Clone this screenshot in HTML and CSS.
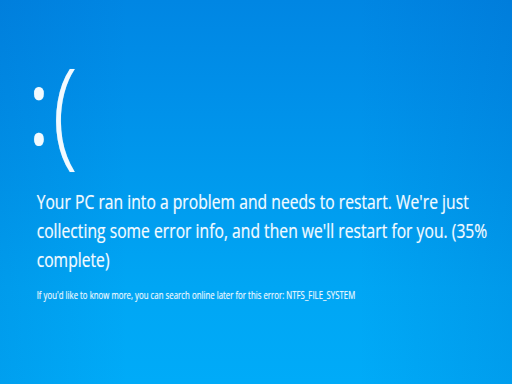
FILE: index.html
```html
<!DOCTYPE html>
<html lang="en">
<head>
<meta charset="utf-8">
<title>Your PC ran into a problem</title>
<link rel="stylesheet" href="styles.css">
</head>
<body>
<main class="screen">
  <div class="face"><span class="eyes">:</span><span class="mouth">(</span></div>
  <div class="message">
    <p class="lead">Your PC ran into a problem and needs to restart. We're just collecting some error info, and then we'll restart for you. (35% complete)</p>
    <p class="detail">If you'd like to know more, you can search online later for this error: NTFS_FILE_SYSTEM</p>
  </div>
</main>
</body>
</html>
```

FILE: styles.css
```css
html, body {
  margin: 0;
  height: 100%;
}

body {
  width: 512px;
  height: 384px;
  overflow: hidden;
  background:
    linear-gradient(90deg, rgba(0, 60, 160, 0.10) 0%, rgba(0, 60, 160, 0) 25%, rgba(0, 60, 160, 0) 70%, rgba(0, 60, 160, 0.12) 100%),
    linear-gradient(180deg, #0086e3 0%, #0090e9 25%, #009bee 50%, #00a6f4 75%, #00abf8 100%);
  color: #f2faff;
  font-family: "Open Sans", "Noto Sans", sans-serif;
  text-shadow: 0 0 1px rgba(230, 246, 255, 0.45);
}

.screen {
  display: flex;
  flex-direction: column;
  padding: 0 0 0 28px;
}

.face {
  height: 118px;
  margin-top: 49px;
  font-size: 118px;
  font-weight: 300;
  line-height: 118px;
  white-space: nowrap;
  transform: scaleX(0.8);
  transform-origin: 0 0;
}

.eyes {
  font-size: 104px;
  font-weight: 400;
  line-height: 1;
  vertical-align: 8px;
}

.mouth {
  margin-left: 3px;
}

.message {
  width: 612px;
  padding-left: 11px;
  margin-top: 20px;
  transform: scaleX(0.785);
  transform-origin: 0 0;
}

.lead {
  margin: 0;
  font-size: 20px;
  line-height: 29px;
}

.detail {
  margin: 14px 0 0;
  font-size: 10px;
  line-height: 14px;
}
```
